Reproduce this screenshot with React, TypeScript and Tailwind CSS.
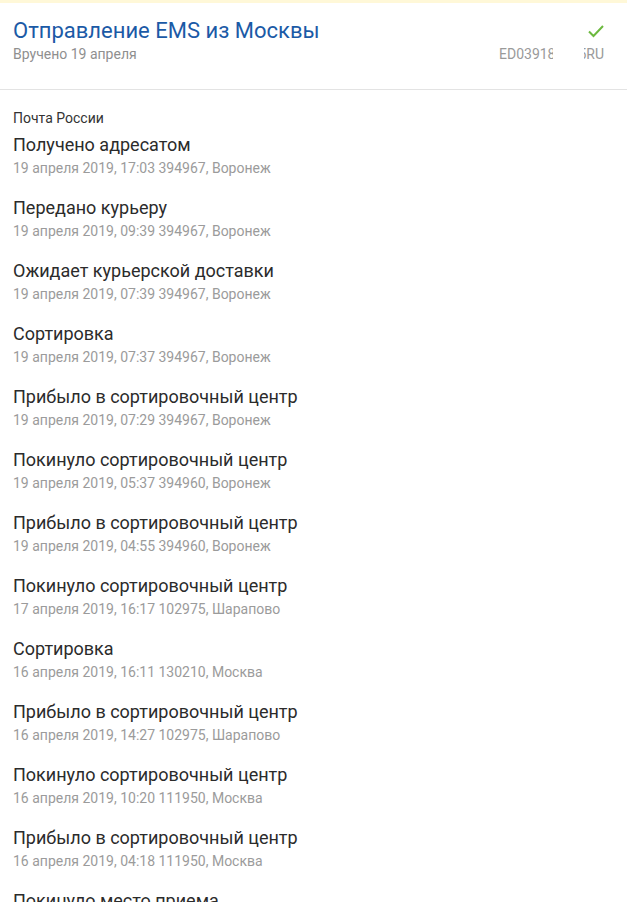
import React from "react";

const events: [string, string][] = [
  ["Получено адресатом", "19 апреля 2019, 17:03 394967, Воронеж"],
  ["Передано курьеру", "19 апреля 2019, 09:39 394967, Воронеж"],
  ["Ожидает курьерской доставки", "19 апреля 2019, 07:39 394967, Воронеж"],
  ["Сортировка", "19 апреля 2019, 07:37 394967, Воронеж"],
  ["Прибыло в сортировочный центр", "19 апреля 2019, 07:29 394967, Воронеж"],
  ["Покинуло сортировочный центр", "19 апреля 2019, 05:37 394960, Воронеж"],
  ["Прибыло в сортировочный центр", "19 апреля 2019, 04:55 394960, Воронеж"],
  ["Покинуло сортировочный центр", "17 апреля 2019, 16:17 102975, Шарапово"],
  ["Сортировка", "16 апреля 2019, 16:11 130210, Москва"],
  ["Прибыло в сортировочный центр", "16 апреля 2019, 14:27 102975, Шарапово"],
  ["Покинуло сортировочный центр", "16 апреля 2019, 10:20 111950, Москва"],
  ["Прибыло в сортировочный центр", "16 апреля 2019, 04:18 111950, Москва"],
  ["Покинуло место приема", "15 апреля 2019, 18:02 111950, Москва"],
];

export default function App() {
  return (
    <div
      className="w-[627px] h-[902px] overflow-hidden bg-white"
      style={{ fontFamily: "Roboto, 'Noto Sans', sans-serif" }}
    >
      <div className="h-[3px] bg-[#fff8d8]" />
      <div className="flex justify-between pl-[13px] pr-[23px] pt-[15px] h-[87px] border-b border-[#e3e3e3]">
        <div>
          <div className="text-[22px] leading-[26px] text-[#1b5aa6]">Отправление EMS из Москвы</div>
          <div className="text-[14px] leading-[18px] text-[#8f8f8f] mt-[1px]">Вручено 19 апреля</div>
        </div>
        <div className="flex flex-col items-end">
          <svg width="18" height="16" viewBox="0 0 18 16" className="mt-[5px] mr-[-1px]">
            <path d="M2 8.5 L6.5 13 L16 3" fill="none" stroke="#6cb93f" strokeWidth="2" />
          </svg>
          <div className="flex text-[14px] leading-[18px] text-[#9a9a9a] mt-[6px]">
            <span className="w-[54px] overflow-hidden whitespace-nowrap">ED039185</span>
            <span className="w-[31px]" />
            <span className="w-[20px] overflow-hidden whitespace-nowrap flex justify-end">5RU</span>
          </div>
        </div>
      </div>
      <div className="pl-[13px] pt-[20px]">
        <div className="text-[14px] leading-[16px] text-[#333]">Почта России</div>
        <div className="flex flex-col gap-[19px] mt-[8px]">
          {events.map(([t, d], i) => (
            <div key={i}>
              <div className="text-[18px] leading-[22px] text-[#2b2b2b]">{t}</div>
              <div className="text-[14px] leading-[20px] text-[#9b9b9b] mt-[2px]">{d}</div>
            </div>
          ))}
        </div>
      </div>
    </div>
  );
}
